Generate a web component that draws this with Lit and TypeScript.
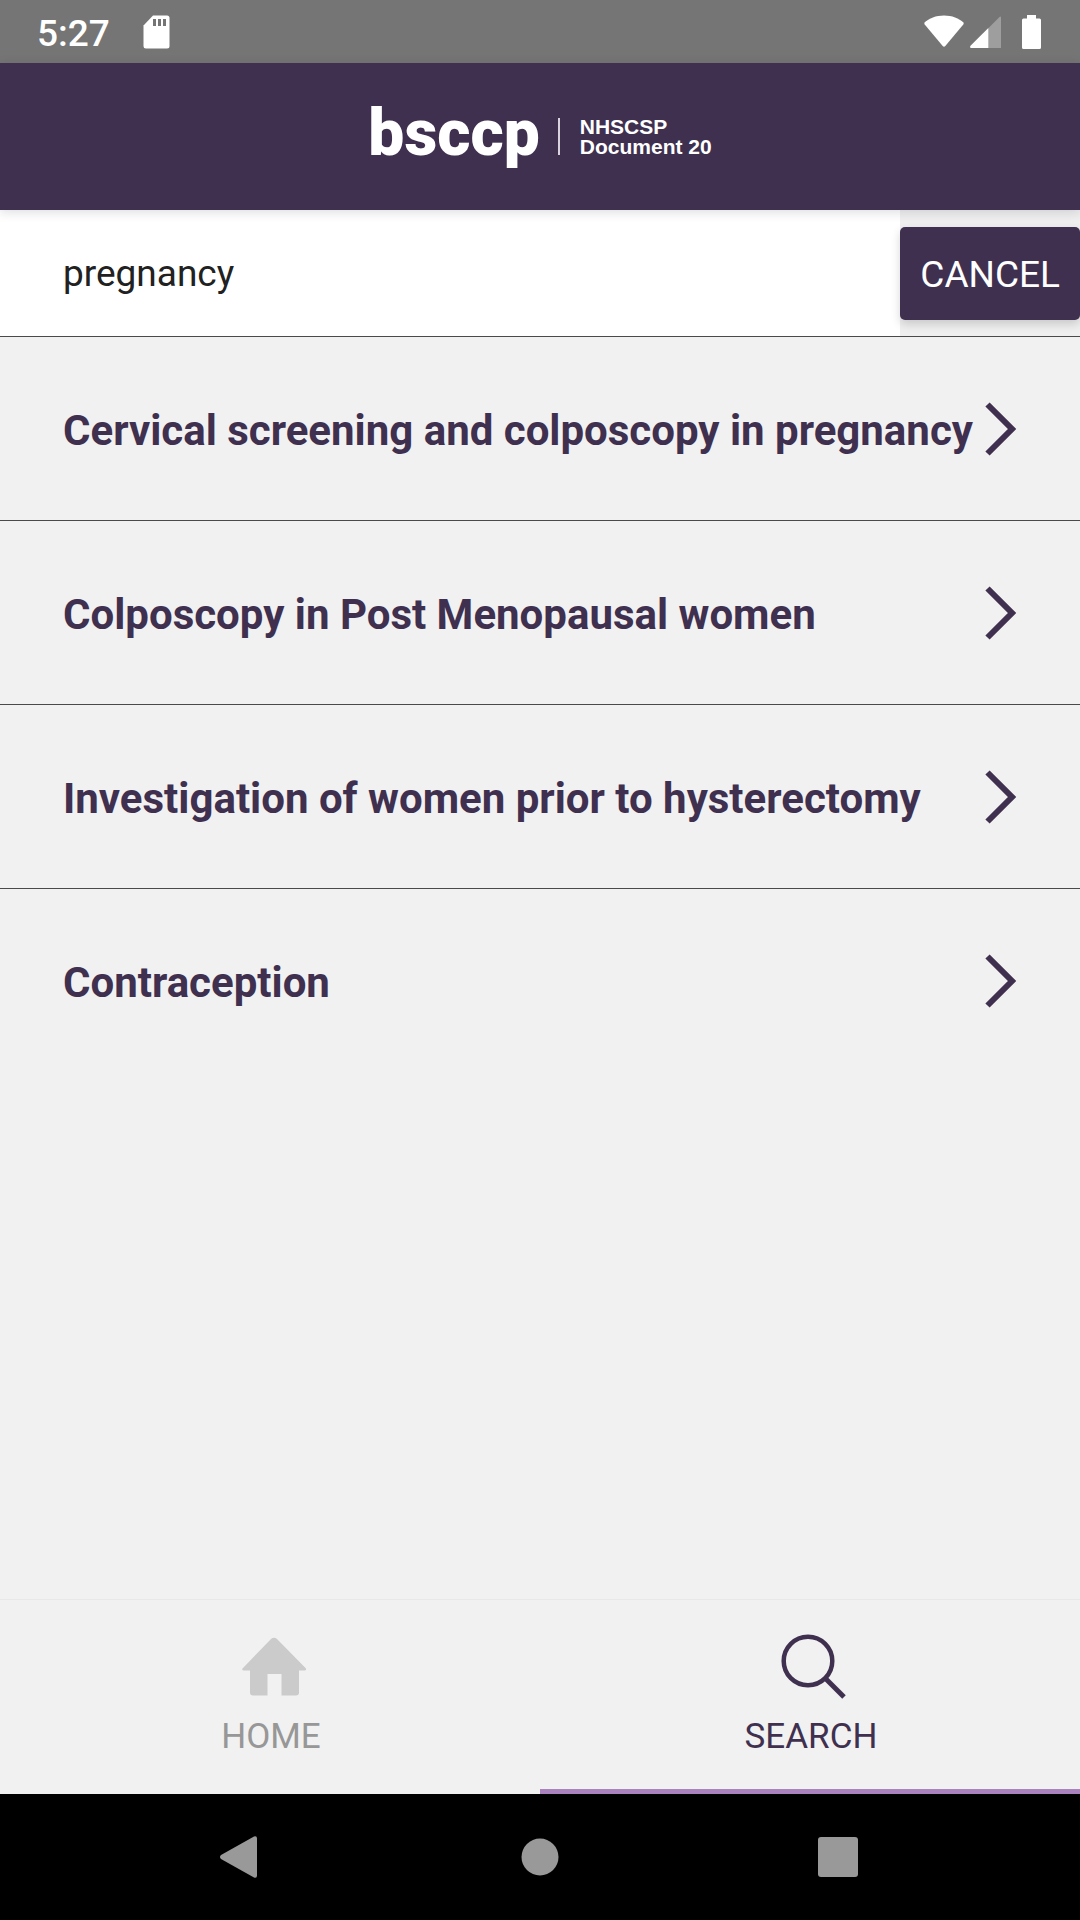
import { LitElement, html, css } from "lit";
import { customElement, state } from "lit/decorators.js";
import { classMap } from "lit/directives/class-map.js";

const RESULTS = [
  "Cervical screening and colposcopy in pregnancy",
  "Colposcopy in Post Menopausal women",
  "Investigation of women prior to hysterectomy",
  "Contraception",
];

@customElement("status-bar")
class StatusBar extends LitElement {
  static styles = css`
    :host {
      display: flex;
      align-items: center;
      justify-content: space-between;
      height: 63px;
      padding: 0 39px 0 37px;
      background: #757575;
      color: #fff;
      font: 500 37px/40px Roboto, sans-serif;
    }
    .group {
      display: flex;
      align-items: center;
    }
    .left {
      gap: 33px;
    }
    .time {
      padding-top: 4px;
    }
    svg {
      display: block;
    }
    .signal {
      margin: 0 20px 0 6px;
    }
  `;

  render() {
    return html`
      <div class="group left">
        <span class="time">5:27</span>
        <svg width="27" height="34" viewBox="0 0 27 34" aria-hidden="true">
          <path fill="#fff" d="M10 0.500H24Q26.500 .5 26.500 3V31Q26.500 33.500 24 33.500H3Q.5 33.500 .5 31V10.500Z" />
          <path fill="#757575" d="M10 4h3v7h-3zM15 4h3v7h-3zM20 4h3v7h-3z" />
        </svg>
      </div>
      <div class="group">
        <svg width="40" height="34" viewBox="0 0 40 34" aria-hidden="true">
          <path fill="#fff" d="M20 .5C28 .5 35 3.300 39.500 7.500Q40 8.500 39.300 9.500L21.300 31Q20 32.500 18.700 31L.7 9.500Q0 8.500 .5 7.500C5 3.300 12 .5 20 .5Z" />
        </svg>
        <svg class="signal" width="32" height="34" viewBox="0 0 32 34" aria-hidden="true">
          <path fill="#9e9e9e" d="M18 13.500L29.500 2Q31 1 31 2.500V33H18Z" />
          <path fill="#fff" d="M18.300 13V33H1Q-.5 32.500 .5 30.800Z" />
        </svg>
        <svg width="19" height="34" viewBox="0 0 19 34" aria-hidden="true">
          <path fill="#fff" d="M5 0h9v3.500h3.500Q19 3.500 19 5v27.500Q19 34 17.500 34h-16Q0 34 0 32.500V5Q0 3.500 1.500 3.500H5z" />
        </svg>
      </div>
    `;
  }
}

@customElement("brand-header")
class BrandHeader extends LitElement {
  static styles = css`
    :host {
      display: flex;
      align-items: center;
      justify-content: center;
      height: 147px;
      background: #3f3050;
      color: #fff;
      position: relative;
      z-index: 1;
      box-shadow: 0 2px 10px rgba(40, 30, 60, 0.16);
    }
    .brand {
      display: flex;
      align-items: center;
    }
    .name {
      font: 900 64px/72px Roboto, sans-serif;
      padding-bottom: 6px;
    }
    .rule {
      width: 2px;
      height: 37px;
      margin: 0 20px 0 18px;
      background: #d9d3e0;
    }
    .document {
      font: 700 21px/20px "Liberation Sans", Arial, sans-serif;
    }
  `;

  render() {
    return html`
      <div class="brand">
        <span class="name">bsccp</span>
        <span class="rule"></span>
        <span class="document">NHSCSP<br />Document 20</span>
      </div>
    `;
  }
}

@customElement("app-root")
class AppRoot extends LitElement {
  static styles = css`
    :host {
      display: flex;
      flex-direction: column;
      min-height: 100vh;
      background: #f1f1f1;
      color: #3f3050;
      font-family: Roboto, sans-serif;
    }
    button,
    input {
      font: inherit;
      border: 0;
      margin: 0;
      border-radius: 0;
      outline: 0;
    }
    svg {
      display: block;
      flex: none;
    }
    .search {
      display: flex;
      align-items: center;
      height: 126px;
      border-bottom: 1px solid #4a4a4a;
      background: #efefef;
      font-size: 37px;
      line-height: 44px;
    }
    .query {
      flex: 1;
      min-width: 0;
      align-self: stretch;
      padding: 2px 0 0 63px;
      background: #fff;
      color: #212121;
    }
    .cancel {
      height: 93px;
      padding: 4px 20px 0;
      border-radius: 5px;
      background: #3f3050;
      color: #fff;
      box-shadow: 0 4px 10px rgba(0, 0, 0, 0.16);
    }
    .results {
      flex: 1;
      margin: 0;
      padding: 0;
      list-style: none;
    }
    .result + .result {
      border-top: 1px solid #4a4a4a;
    }
    .link {
      display: flex;
      align-items: center;
      justify-content: space-between;
      min-height: 183px;
      padding: 0 63px;
      color: inherit;
      text-decoration: none;
      font-size: 42px;
      font-weight: 700;
      line-height: 50px;
    }
    .title {
      padding-top: 4px;
    }
    .tabs {
      display: flex;
      height: 194px;
      border-top: 1px solid #e8e8e8;
    }
    .tab {
      flex: 1;
      display: flex;
      flex-direction: column;
      align-items: center;
      gap: 16px;
      padding: 34px 0 0 2px;
      background: none;
      border-bottom: 5px solid transparent;
      color: #979797;
      font-size: 35px;
      line-height: 42px;
    }
    .tab.active {
      color: #3f3050;
      border-bottom-color: #aa82bd;
    }
    .system {
      display: flex;
      align-items: center;
      justify-content: space-between;
      height: 126px;
      padding: 0 222px 0 216px;
      background: #000;
    }
    .key {
      padding: 0;
      background: none;
    }
  `;

  @state() private query = "pregnancy";
  @state() private tab = "search";

  private onInput(e: Event) {
    this.query = (e.target as HTMLInputElement).value;
  }

  private tabButton(id: string, label: string, icon: unknown) {
    const active = this.tab === id;
    return html`
      <button
        class=${classMap({ tab: true, active })}
        aria-current=${active ? "page" : "false"}
        @click=${() => (this.tab = id)}
      >
        ${icon}<span>${label}</span>
      </button>
    `;
  }

  render() {
    return html`
      <status-bar></status-bar>
      <brand-header></brand-header>
      <div class="search">
        <input class="query" type="text" aria-label="Search" .value=${this.query} @input=${this.onInput} />
        <button class="cancel" @click=${() => (this.query = "")}>CANCEL</button>
      </div>
      <ul class="results">
        ${RESULTS.map(
          (title) => html`
            <li class="result">
              <a class="link" href="#">
                <span class="title">${title}</span>
                <svg width="32" height="54" viewBox="0 0 32 54" aria-hidden="true">
                  <path d="M2.500 2.500L27 27L2.500 51.500" fill="none" stroke="#3f3050" stroke-width="6" />
                </svg>
              </a>
            </li>
          `
        )}
      </ul>
      <nav class="tabs">
        ${this.tabButton(
          "home",
          "HOME",
          html`<svg width="70" height="66" viewBox="-4 0 70 66" aria-hidden="true">
            <path
              fill="#cbcbcb"
              d="M31 5Q34 2.500 37 5L66 34.500Q66.500 36.500 64.500 36.500H59V58.500Q59 61.500 56 61.500H41.500V40H27.500V61.500H13Q10 61.500 10 58.500V36.500H4Q1.500 36.500 2.500 34.500Z"
            />
          </svg>`
        )}
        ${this.tabButton(
          "search",
          "SEARCH",
          html`<svg width="70" height="66" viewBox="-4 0 70 66" aria-hidden="true">
            <g fill="none" stroke="#3f3050">
              <circle cx="28" cy="27" r="24.300" stroke-width="4.500" />
              <path d="M45 44L64 63" stroke-width="5" />
            </g>
          </svg>`
        )}
      </nav>
      <div class="system">
        <button class="key" aria-label="Back">
          <svg width="46" height="42" viewBox="0 0 46 42" aria-hidden="true">
            <path fill="#999" d="M38 .5Q41 -.5 41 2.500V39.500Q41 42.500 38 41.500L5 23Q3 21 5 19Z" />
          </svg>
        </button>
        <button class="key" aria-label="Home">
          <svg width="38" height="38" viewBox="0 0 38 38" aria-hidden="true">
            <circle cx="19" cy="19" r="18.500" fill="#999" />
          </svg>
        </button>
        <button class="key" aria-label="Overview">
          <svg width="40" height="40" viewBox="0 0 40 40" aria-hidden="true">
            <rect width="40" height="40" rx="3" fill="#999" />
          </svg>
        </button>
      </div>
    `;
  }
}
